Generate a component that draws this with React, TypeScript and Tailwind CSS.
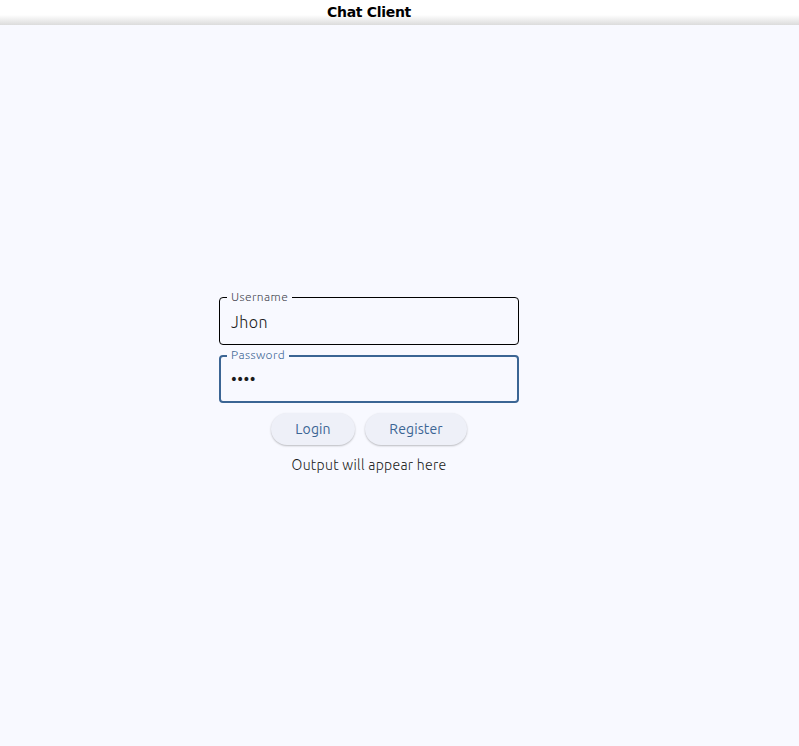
import React, { useState } from "react";

export default function App() {
  const [username, setUsername] = useState("Jhon");
  const [password, setPassword] = useState("1234");

  return (
    <div className="flex h-[746px] w-[799px] flex-col bg-[#f8f9ff] font-['Ubuntu','Noto_Sans',sans-serif]">
      <div className="flex h-[25px] shrink-0 items-center justify-center bg-gradient-to-b from-white from-60% to-[#dcdcdc] pr-[61px]">
        <span className="font-['DejaVu_Sans',sans-serif] text-[14px] font-bold tracking-[-0.3px] text-black">
          Chat Client
        </span>
      </div>
      <div className="flex flex-1 items-center justify-center pt-[2px] pr-[61px]">
        <div className="flex w-[300px] flex-col items-center">
          <div className="relative h-[48px] w-full rounded-[4px] border border-black">
            <span className="absolute -top-[8px] left-[7px] bg-[#f8f9ff] px-[4px] text-[12px] font-light leading-[14px] tracking-[0.4px] text-[#45464f]">
              Username
            </span>
            <input
              value={username}
              onChange={(e) => setUsername(e.target.value)}
              className="h-full w-full bg-transparent px-[11px] pt-[1px] text-[16px] font-light tracking-[0.5px] text-[#1a1b20] outline-none"
            />
          </div>
          <div className="relative mt-[10px] h-[48px] w-full rounded-[4px] border-2 border-[#3b6594]">
            <span className="absolute -top-[9px] left-[6px] bg-[#f8f9ff] px-[4px] text-[12px] font-light leading-[14px] tracking-[0.4px] text-[#3b6594]">
              Password
            </span>
            <input
              type="password"
              value={password}
              onChange={(e) => setPassword(e.target.value)}
              className="h-full w-full bg-transparent px-[10px] pb-[1px] text-[16px] tracking-[0.5px] text-[#1c1c1c] outline-none"
            />
          </div>
          <div className="mt-[10px] flex gap-[10px]">
            <button className="h-[32px] w-[84px] rounded-full bg-[#eef0f8] text-[14px] tracking-[0.1px] text-[#3b6594] shadow-[0_1px_2px_rgba(0,0,0,0.25)]">
              Login
            </button>
            <button className="h-[32px] w-[102px] rounded-full bg-[#eef0f8] text-[14px] tracking-[0.1px] text-[#3b6594] shadow-[0_1px_2px_rgba(0,0,0,0.25)]">
              Register
            </button>
          </div>
          <p className="mt-[10px] text-[14px] font-light tracking-[0.3px] text-[#1a1b20]">
            Output will appear here
          </p>
        </div>
      </div>
    </div>
  );
}
